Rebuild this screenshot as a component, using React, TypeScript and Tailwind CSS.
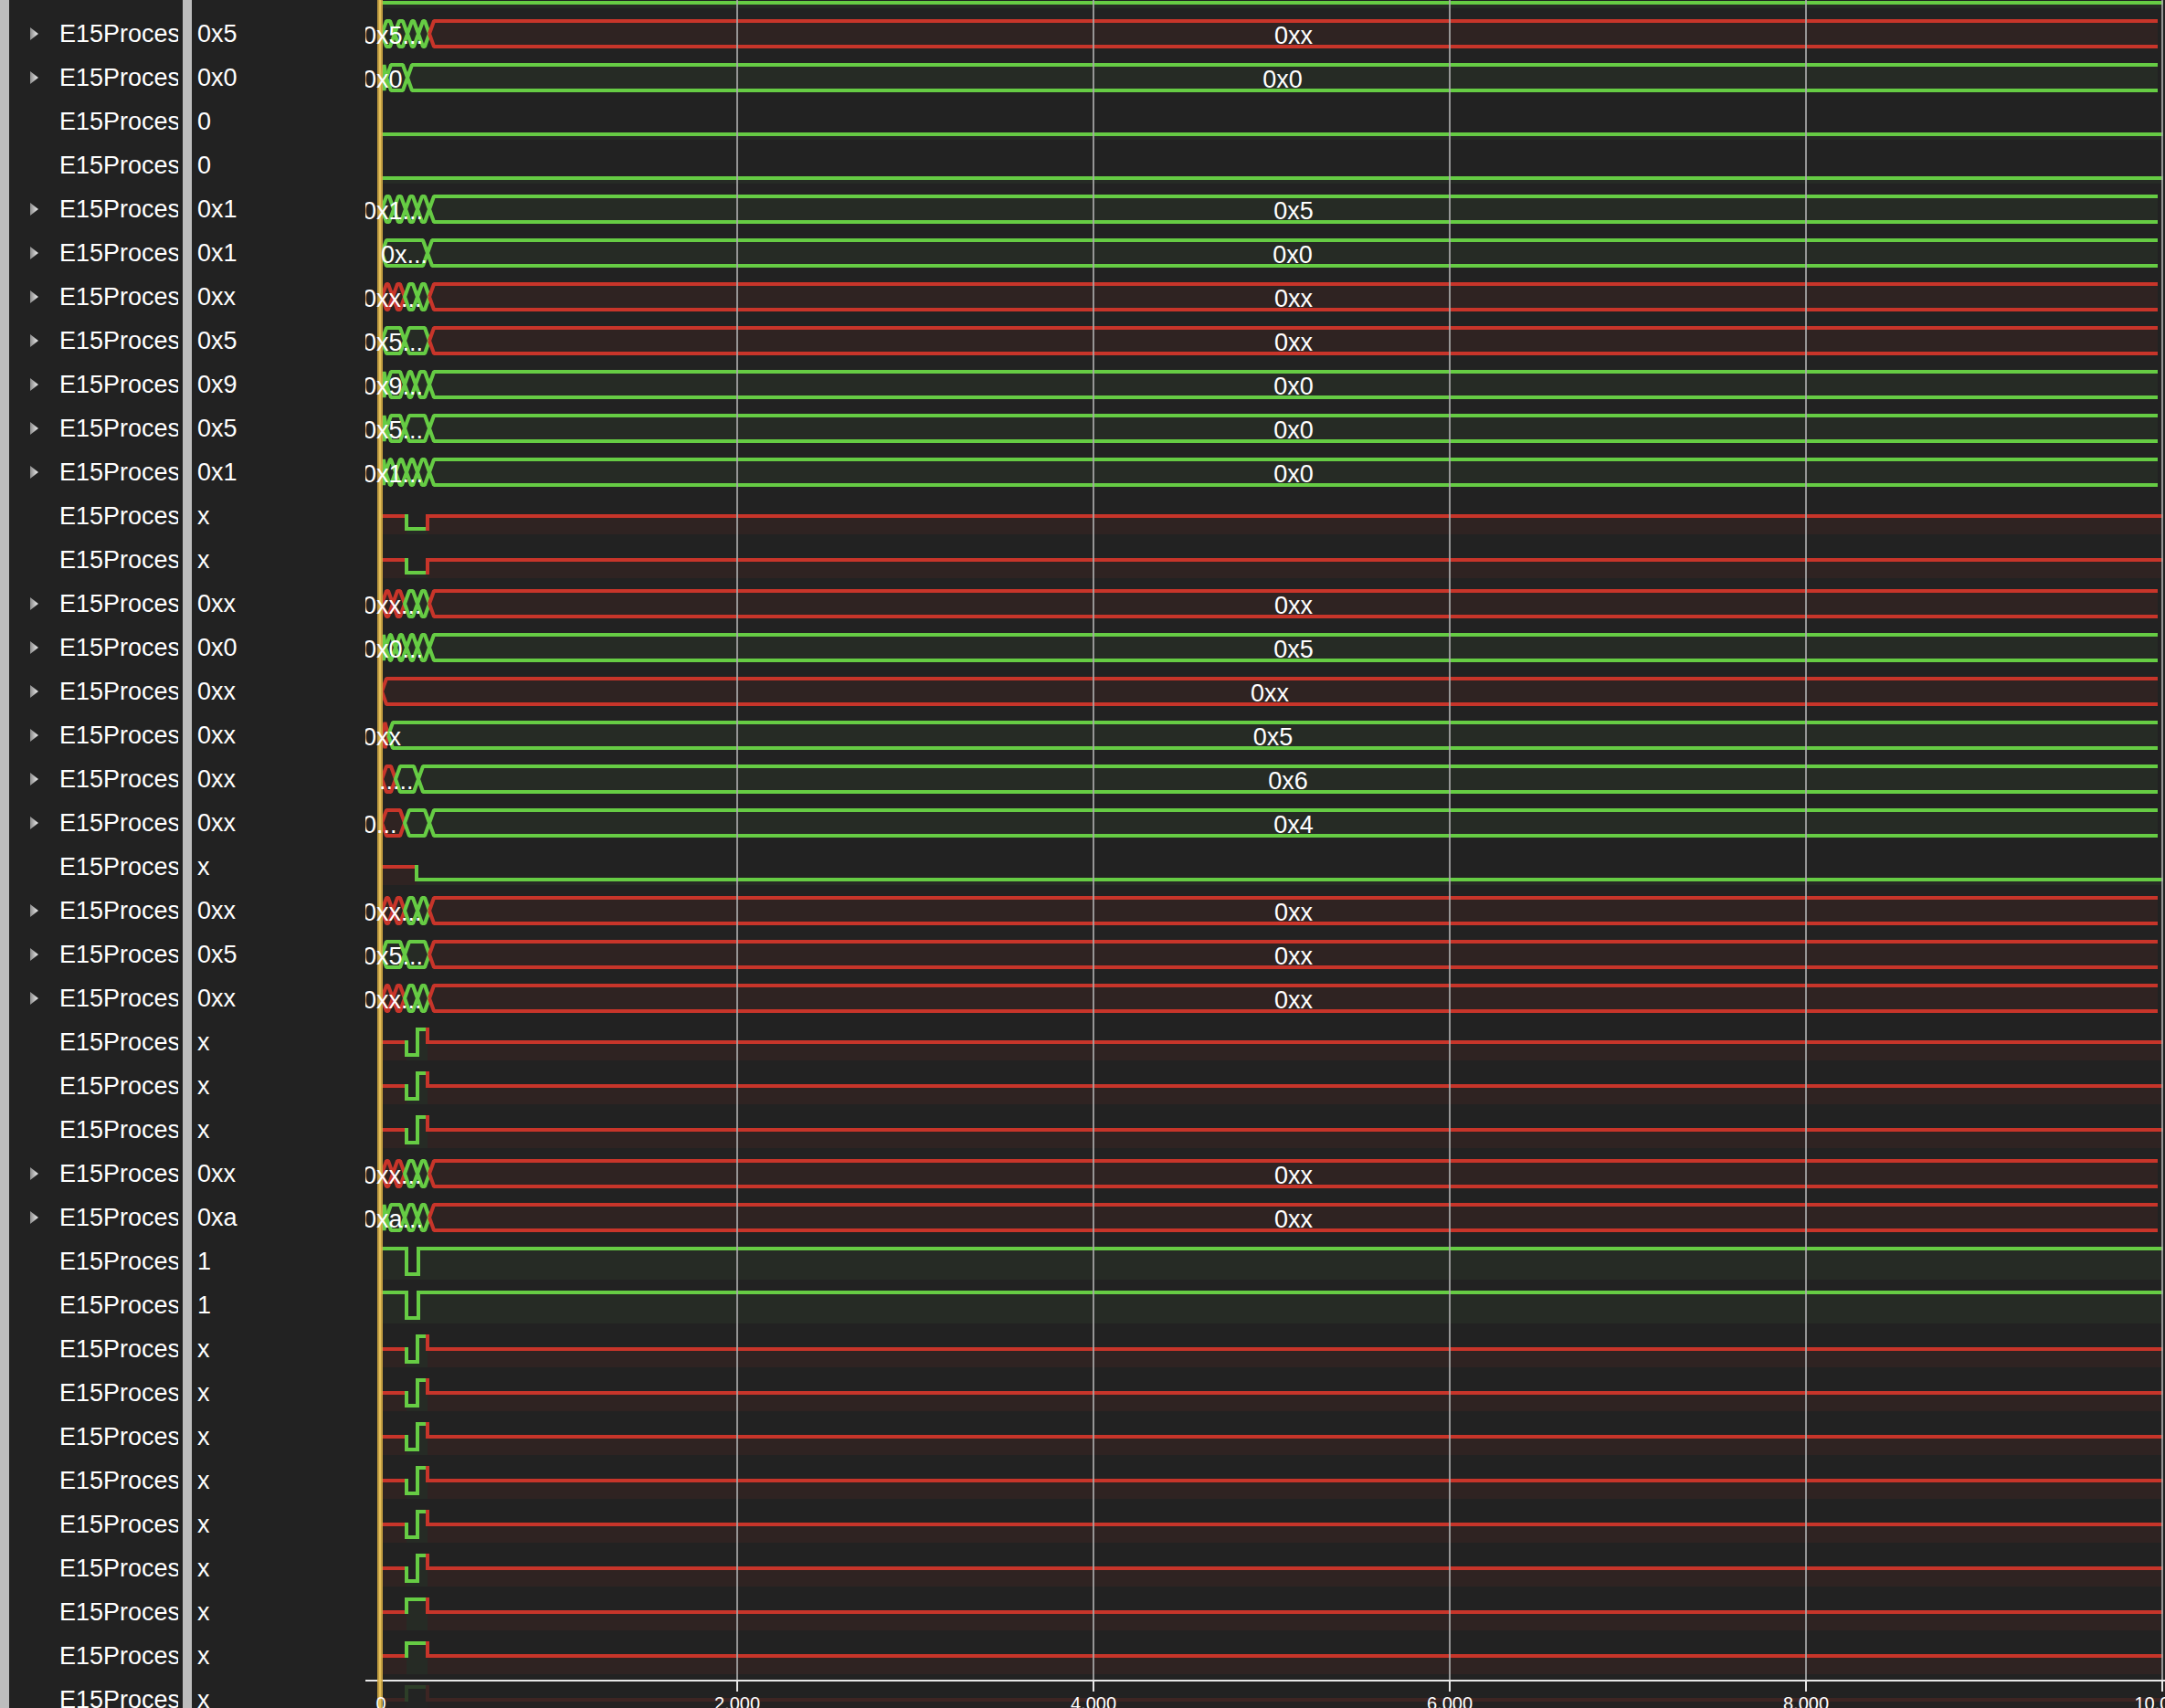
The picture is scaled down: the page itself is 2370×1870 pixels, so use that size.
import React from 'react';

type C = 'g' | 'r';
type L = 'h' | 'l' | 'x';
type Wave =
  | { kind: 'bus'; segs: [number, C][]; label: string; tag?: [string, number] }
  | { kind: 'bit'; segs: [number, L][] };

interface Row {
  value: string;
  open: boolean;
  wave: Wave;
}

const G = '#66cc44';
const R = '#c8352a';
const GF = '#262b25';
const RF = '#2f2322';
const BUS_END = 2362;
const BIT_END = 2366;
const FONT = 'Liberation Sans, Arial, sans-serif';

const rowTop = (i: number) => 23 + i * 48;

// wave patterns that repeat
const rrgg = (last: C): [number, C][] => [[418, 'r'], [430, 'r'], [443, 'g'], [457, 'g'], [470, last]];
const greens = (): [number, C][] => [[418, 'g'], [422, 'g'], [433, 'g'], [445, 'g'], [457, 'g'], [470, 'g']];
const bus = (segs: [number, C][], label: string, tag?: [string, number]): Wave => ({ kind: 'bus', segs, label, tag });
const bit = (segs: [number, L][]): Wave => ({ kind: 'bit', segs });

const lowPulse = (): Wave => bit([[418, 'x'], [445, 'l'], [468, 'x']]);
const lowHigh = (): Wave => bit([[418, 'x'], [445, 'l'], [457, 'h'], [468, 'x']]);
const highPulse = (): Wave => bit([[418, 'x'], [445, 'h'], [468, 'x']]);
const one = (): Wave => bit([[418, 'h'], [445, 'l'], [458, 'h']]);

const rows: Row[] = [
  { value: '0x5', open: true, wave: bus([[418, 'g'], [432, 'g'], [446, 'g'], [458, 'g'], [470, 'r']], '0xx', ['0x5...', 397]) },
  { value: '0x0', open: true, wave: bus([[418, 'g'], [423, 'g'], [446, 'g']], '0x0', ['0x0', 397]) },
  { value: '0', open: false, wave: bit([[418, 'l']]) },
  { value: '0', open: false, wave: bit([[418, 'l']]) },
  { value: '0x1', open: true, wave: bus([[418, 'g'], [431, 'g'], [444, 'g'], [457, 'g'], [470, 'g']], '0x5', ['0x1...', 397]) },
  { value: '0x1', open: true, wave: bus([[418, 'g'], [468, 'g']], '0x0', ['0x...', 417]) },
  { value: '0xx', open: true, wave: bus(rrgg('r'), '0xx', ['0xx...', 397]) },
  { value: '0x5', open: true, wave: bus([[418, 'g'], [443, 'g'], [470, 'r']], '0xx', ['0x5...', 397]) },
  { value: '0x9', open: true, wave: bus([[418, 'g'], [423, 'g'], [443, 'g'], [455, 'g'], [470, 'g']], '0x0', ['0x9...', 397]) },
  { value: '0x5', open: true, wave: bus([[418, 'g'], [423, 'g'], [443, 'g'], [470, 'g']], '0x0', ['0x5...', 397]) },
  { value: '0x1', open: true, wave: bus(greens(), '0x0', ['0x1...', 397]) },
  { value: 'x', open: false, wave: lowPulse() },
  { value: 'x', open: false, wave: lowPulse() },
  { value: '0xx', open: true, wave: bus(rrgg('r'), '0xx', ['0xx...', 397]) },
  { value: '0x0', open: true, wave: bus(greens(), '0x5', ['0x0...', 397]) },
  { value: '0xx', open: true, wave: bus([[418, 'r']], '0xx') },
  { value: '0xx', open: true, wave: bus([[418, 'r'], [425, 'g']], '0x5', ['0xx', 397]) },
  { value: '0xx', open: true, wave: bus([[418, 'r'], [433, 'g'], [458, 'g']], '0x6', ['.....', 415]) },
  { value: '0xx', open: true, wave: bus([[418, 'r'], [443, 'g'], [470, 'g']], '0x4', ['0...', 397]) },
  { value: 'x', open: false, wave: bit([[418, 'x'], [456, 'l']]) },
  { value: '0xx', open: true, wave: bus(rrgg('r'), '0xx', ['0xx...', 397]) },
  { value: '0x5', open: true, wave: bus([[418, 'g'], [443, 'g'], [470, 'r']], '0xx', ['0x5...', 397]) },
  { value: '0xx', open: true, wave: bus(rrgg('r'), '0xx', ['0xx...', 397]) },
  { value: 'x', open: false, wave: lowHigh() },
  { value: 'x', open: false, wave: lowHigh() },
  { value: 'x', open: false, wave: lowHigh() },
  { value: '0xx', open: true, wave: bus(rrgg('r'), '0xx', ['0xx...', 397]) },
  { value: '0xa', open: true, wave: bus([[418, 'g'], [423, 'g'], [443, 'g'], [457, 'g'], [470, 'r']], '0xx', ['0xa...', 397]) },
  { value: '1', open: false, wave: one() },
  { value: '1', open: false, wave: one() },
  { value: 'x', open: false, wave: lowHigh() },
  { value: 'x', open: false, wave: lowHigh() },
  { value: 'x', open: false, wave: lowHigh() },
  { value: 'x', open: false, wave: lowHigh() },
  { value: 'x', open: false, wave: lowHigh() },
  { value: 'x', open: false, wave: lowHigh() },
  { value: 'x', open: false, wave: highPulse() },
  { value: 'x', open: false, wave: highPulse() },
  { value: 'x', open: false, wave: highPulse() },
];

function BitWave({ i, segs }: { i: number; segs: [number, L][] }) {
  const T = rowTop(i);
  const B = T + 28;
  const F = B + 6;
  const yOf = (l: L) => (l === 'h' ? T : l === 'l' ? B : T + 14);
  const end = (k: number) => (k + 1 < segs.length ? segs[k + 1][0] : BIT_END);
  return (
    <g>
      {segs.map(([x0, l], k) => (
        <rect key={`f${k}`} x={x0} y={yOf(l)} width={end(k) - x0} height={F - yOf(l)} fill={l === 'x' ? RF : GF} />
      ))}
      {segs.map(([x0, l], k) => {
        const y = yOf(l);
        const yp = k > 0 ? yOf(segs[k - 1][1]) : y;
        return (
          <path
            key={`s${k}`}
            d={`M${x0} ${yp} V${y} H${end(k)}`}
            stroke={l === 'x' ? R : G}
            strokeWidth={4}
            strokeLinecap="square"
            fill="none"
          />
        );
      })}
    </g>
  );
}

function BusWave({ i, segs, label }: { i: number; segs: [number, C][]; label: string }) {
  const T = rowTop(i);
  const B = T + 28;
  const M = T + 14;
  const lastStart = segs[segs.length - 1][0];
  return (
    <g>
      {segs.map(([x0, c], k) => {
        const last = k === segs.length - 1;
        const x1 = last ? BUS_END : segs[k + 1][0];
        const d = Math.min(5, (x1 - x0) / 2);
        const fillPts = last
          ? `${x0},${M} ${x0 + d},${T} ${x1},${T} ${x1},${B} ${x0 + d},${B}`
          : `${x0},${M} ${x0 + d},${T} ${x1 - d},${T} ${x1},${M} ${x1 - d},${B} ${x0 + d},${B}`;
        const line = last
          ? `M${x0} ${M} L${x0 + d} ${T} H${x1} M${x0} ${M} L${x0 + d} ${B} H${x1}`
          : `M${x0} ${M} L${x0 + d} ${T} L${x1 - d} ${T} L${x1} ${M} L${x1 - d} ${B} L${x0 + d} ${B} Z`;
        return (
          <g key={k}>
            <polygon points={fillPts} fill={c === 'r' ? RF : GF} />
            <path d={line} stroke={c === 'r' ? R : G} strokeWidth={4} strokeLinejoin="bevel" fill="none" />
          </g>
        );
      })}
      <text x={(lastStart + BUS_END) / 2} y={T + 25} fontSize={27} fill="#ffffff" textAnchor="middle" fontFamily={FONT}>
        {label}
      </text>
    </g>
  );
}

function Waves() {
  const grid = [807, 1197, 1587, 1977, 2367];
  const ticks = [
    { x: 417, t: '0' },
    { x: 807, t: '2,000' },
    { x: 1197, t: '4,000' },
    { x: 1587, t: '6,000' },
    { x: 1977, t: '8,000' },
    { x: 2367, t: '10,000' },
  ];
  return (
    <svg width={1970} height={1870} viewBox="400 0 1970 1870" className="block shrink-0">
      {/* row scrolled half out of view */}
      <BitWave i={-1} segs={[[418, 'l']]} />

      {rows.map((r, i) =>
        r.wave.kind === 'bus' ? (
          <BusWave key={i} i={i} segs={r.wave.segs} label={r.wave.label} />
        ) : (
          <BitWave key={i} i={i} segs={r.wave.segs} />
        )
      )}

      {/* grid */}
      {grid.map(x => (
        <rect key={x} x={x - 1} y={0} width={2} height={1840} fill="#a9a9a9" fillOpacity={0.85} />
      ))}

      {/* time axis */}
      <rect x={400} y={1842} width={1970} height={28} fill="#222222" fillOpacity={0.84} />
      <rect x={400} y={1839} width={1970} height={2} fill="#e8e8e8" />
      {ticks.slice(1).map(tk => (
        <rect key={tk.x} x={tk.x - 1} y={1840} width={2} height={12} fill="#e8e8e8" />
      ))}

      {/* cursor */}
      <rect x={413} y={0} width={6} height={1870} fill="#d2aa45" fillOpacity={0.9} />
      <rect x={415} y={0} width={2} height={1870} fill="#e9c45c" fillOpacity={0.9} />

      {/* labels of the short segments, drawn over the cursor */}
      {rows.map((r, i) =>
        r.wave.kind === 'bus' && r.wave.tag ? (
          <text key={i} x={r.wave.tag[1]} y={rowTop(i) + 25} fontSize={27} fill="#ffffff" fontFamily={FONT}>
            {r.wave.tag[0]}
          </text>
        ) : null
      )}
      {ticks.map(tk => (
        <text key={tk.t} x={tk.x} y={1872} fontSize={20} fill="#ffffff" textAnchor="middle" fontFamily={FONT}>
          {tk.t}
        </text>
      ))}
    </svg>
  );
}

function Arrow() {
  return (
    <svg width={10} height={14} viewBox="0 0 10 14">
      <defs>
        <linearGradient id="arr" x1="0" x2="1" y1="0" y2="0">
          <stop offset="0" stopColor="#8a8a8a" />
          <stop offset="1" stopColor="#f2f2f2" />
        </linearGradient>
      </defs>
      <polygon points="1,0 10,7 1,14" fill="url(#arr)" />
    </svg>
  );
}

export default function App() {
  return (
    <div className="flex h-[1870px] w-[2370px] overflow-hidden bg-[#222222] font-['Liberation_Sans',Arial,sans-serif] text-white">
      <div className="w-[10px] shrink-0 bg-[#bdbdbd]" />

      {/* Signal names */}
      <div className="flex w-[190px] shrink-0 flex-col pt-[13px]">
        {rows.map((r, i) => (
          <div key={i} className="flex h-[48px] shrink-0 items-center text-[27px] leading-none">
            <div className="flex w-[55px] shrink-0 pl-[22px]">{r.open && <Arrow />}</div>
            <span className="w-[130px] overflow-hidden whitespace-nowrap">E15Proces</span>
          </div>
        ))}
      </div>

      <div className="w-[10px] shrink-0 bg-[#bdbdbd]" />

      {/* Values at cursor */}
      <div className="flex w-[190px] shrink-0 flex-col pt-[13px] pl-[6px]">
        {rows.map((r, i) => (
          <div key={i} className="flex h-[48px] shrink-0 items-center text-[27px] leading-none">
            {r.value}
          </div>
        ))}
      </div>

      <Waves />
    </div>
  );
}
